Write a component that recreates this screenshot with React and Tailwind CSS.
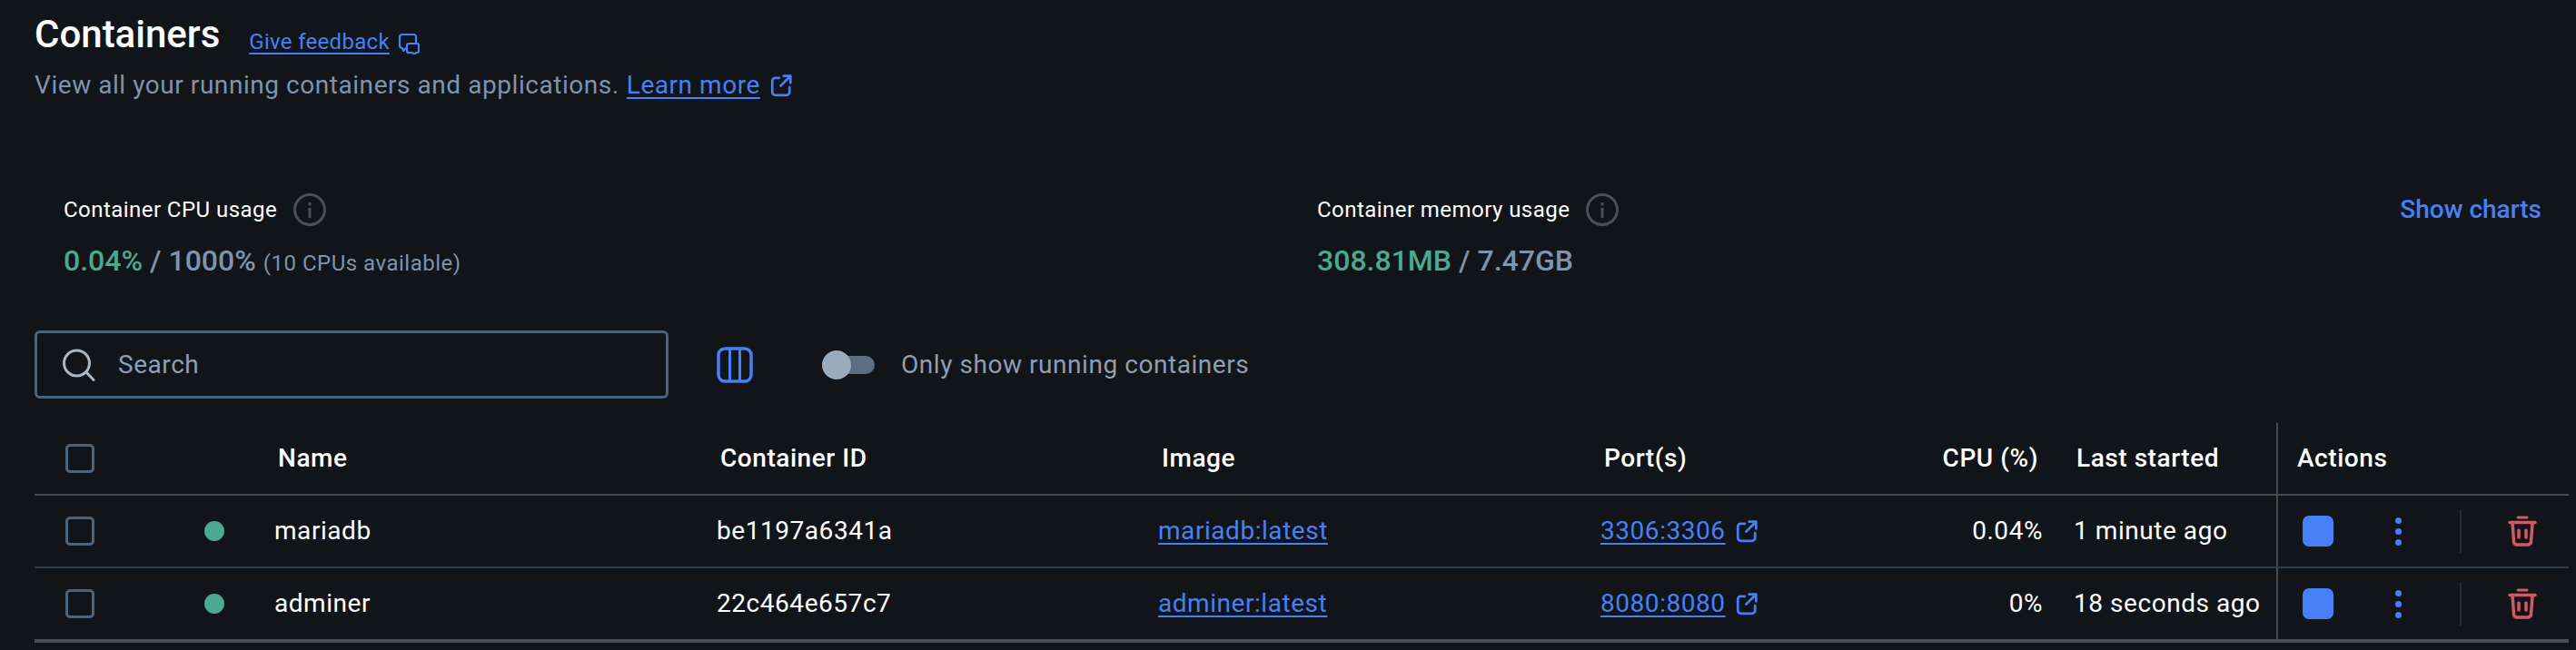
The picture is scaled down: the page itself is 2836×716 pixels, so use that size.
import React from "react";

const BLUE = "text-[#4680f7]";

function ExternalIcon({ className }) {
  return (
    <svg viewBox="0 0 24 24" fill="none" stroke="currentColor" strokeWidth="2.500" strokeLinecap="round" strokeLinejoin="round" className={className}>
      <path d="M10 4.500H6a3 3 0 0 0-3 3V19a3 3 0 0 0 3 3h11.500a3 3 0 0 0 3-3v-5" />
      <path d="M14.500 2.500h7v7" />
      <path d="M21 3l-9.500 9.500" />
    </svg>
  );
}

function FeedbackIcon({ className }) {
  return (
    <svg viewBox="0 0 24 24" fill="none" stroke="currentColor" strokeWidth="2.200" strokeLinejoin="round" className={className}>
      <path d="M5 2h12a3 3 0 0 1 3 3v9a3 3 0 0 1-3 3H9l-3 3-1-3a3 3 0 0 1-3-3V5a3 3 0 0 1 3-3z" />
      <path fill="#11151a" d="M12 12h9a2 2 0 0 1 2 2v6a2 2 0 0 1-2 2h-1l-2 2-2-2h-4a2 2 0 0 1-2-2v-6a2 2 0 0 1 2-2z" />
    </svg>
  );
}

function InfoIcon() {
  return (
    <svg viewBox="0 0 36 36" fill="none" className="w-9 h-9 ml-[18px] text-[#4a4f55]">
      <circle cx="18" cy="18" r="16.500" stroke="currentColor" strokeWidth="3" />
      <rect x="16.500" y="16" width="3" height="11" fill="currentColor" />
      <rect x="16.500" y="10" width="3" height="3.500" fill="currentColor" />
    </svg>
  );
}

function TrashIcon() {
  return (
    <svg viewBox="0 0 34 34" fill="none" stroke="#cd5a65" strokeWidth="3.500" strokeLinecap="round" strokeLinejoin="round" className="w-[34px] h-[34px]">
      <path d="M12 2h10" strokeWidth="3" />
      <path d="M3 7.500h28" />
      <path d="M6 8l1.500 20.500a3.500 3.500 0 0 0 3.500 3.500h12a3.500 3.500 0 0 0 3.500-3.500L28 8" />
      <path d="M13 16v8" />
      <path d="M21 16v8" />
    </svg>
  );
}

function Checkbox() {
  return <div className="w-8 h-8 ml-[34px] rounded-[5px] border-[3px] border-[#4f6378]" />;
}

const cols = "grid grid-cols-[187px_77px_487px_486px_487px_358px_129px_257px_322px] items-center";

function HeaderRow() {
  const cell = "pl-1 font-medium";
  return (
    <div className={`${cols} h-20 border-b-2 border-[#4a4a4a]`}>
      <Checkbox />
      <div />
      <div className={cell}>Name</div>
      <div className={cell}>Container ID</div>
      <div className={cell}>Image</div>
      <div className={cell}>Port(s)</div>
      <div className="font-medium text-right pr-[5px] whitespace-nowrap">CPU (%)</div>
      <div className="pl-[37px] font-medium">Last started</div>
      <div className="h-full flex items-center pl-[21px] border-l-2 border-[#4a4a4a] font-medium">Actions</div>
    </div>
  );
}

function ContainerRow({ name, id, image, port, cpu, started, last }) {
  return (
    <div className={`${cols} ${last ? "h-[82px] border-b-4 border-[#4a4f55]" : "h-20 border-b-2 border-[#2f3d4b]"}`}>
      <Checkbox />
      <div className="w-[22px] h-[22px] rounded-full bg-[#4ca88f]" />
      <div>{name}</div>
      <div>{id}</div>
      <div>
        <a className={`${BLUE} underline underline-offset-4`}>{image}</a>
      </div>
      <div className="flex items-center">
        <a className={`${BLUE} underline underline-offset-4`}>{port}</a>
        <ExternalIcon className={`w-[26px] h-[26px] ml-2.5 ${BLUE}`} />
      </div>
      <div className="text-right">{cpu}</div>
      <div className="pl-[34px] whitespace-nowrap">{started}</div>
      <div className="h-full flex items-center pl-[27px] border-l-2 border-[#4a4a4a]">
        <div className="w-[34px] h-[34px] rounded-[7px] bg-[#4680f7]" />
        <div className="ml-[68px] flex flex-col gap-[5px]">
          <span className="w-[7px] h-[7px] rounded-full bg-[#4680f7]" />
          <span className="w-[7px] h-[7px] rounded-full bg-[#4680f7]" />
          <span className="w-[7px] h-[7px] rounded-full bg-[#4680f7]" />
        </div>
        <div className="ml-[64px] w-0.5 h-12 bg-[#262b31]" />
        <div className="ml-[50px]">
          <TrashIcon />
        </div>
      </div>
    </div>
  );
}

export default function App() {
  return (
    <div className="w-[2836px] h-[716px] overflow-hidden bg-[#11151a] text-white pl-[38px] pr-2 text-[28px] tracking-[0.55px] font-['Roboto',sans-serif]">
      <div className="flex items-end h-[67px]">
        <h1 className="text-[42px] leading-[58px] font-medium tracking-normal">Containers</h1>
        <a className={`ml-8 mb-[5px] text-2xl tracking-[0.3px] underline underline-offset-4 ${BLUE}`}>Give feedback</a>
        <FeedbackIcon className={`w-6 h-6 ml-[9px] mb-[7px] ${BLUE}`} />
      </div>
      <div className="flex items-center mt-[9px] h-9 text-[#7f93ab]">
        <span>View all your running containers and applications.</span>
        <a className={`ml-2 underline underline-offset-4 ${BLUE}`}>Learn more</a>
        <ExternalIcon className={`w-[26px] h-[26px] ml-2.5 ${BLUE}`} />
      </div>

      <div className="flex mt-[101px] pl-8 pr-[30px]">
        <div className="w-[1380px]">
          <div className="flex items-center h-9 text-2xl tracking-[0.45px]">
            Container CPU usage
            <InfoIcon />
          </div>
          <div className="flex items-baseline mt-[18px] text-[32px] leading-10 tracking-normal text-[#7f93ab] font-medium">
            <span className="text-[#4ca88f]">0.04%</span>
            <span className="ml-2">/ 1000%</span>
            <span className="ml-2 text-2xl font-normal tracking-[0.5px]">(10 CPUs available)</span>
          </div>
        </div>
        <div className="flex-1">
          <div className="flex items-center h-9 text-2xl tracking-[0.45px]">
            Container memory usage
            <InfoIcon />
          </div>
          <div className="flex items-baseline mt-[18px] text-[32px] leading-10 tracking-normal text-[#7f93ab] font-medium">
            <span className="text-[#4ca88f]">308.81MB</span>
            <span className="ml-2">/ 7.47GB</span>
          </div>
        </div>
        <a className={`h-9 leading-9 font-medium tracking-normal ${BLUE}`}>Show charts</a>
      </div>

      <div className="flex items-center mt-[57px]">
        <div className="w-[698px] h-[75px] flex items-center pl-7 rounded-[6px] border-[3px] border-[#4f6378] text-[#8f9eb0]">
          <svg viewBox="0 0 36 36" fill="none" stroke="#a9b7c5" strokeWidth="3" strokeLinecap="round" className="w-9 h-9">
            <circle cx="15.500" cy="16" r="14" />
            <path d="M26 26l8 8.500" />
          </svg>
          <span className="ml-[25px]">Search</span>
        </div>
        <svg viewBox="0 0 40 40" fill="none" stroke="#4680f7" strokeWidth="3.500" className="w-10 h-10 ml-[53px]">
          <rect x="2" y="2" width="36" height="36" rx="7" />
          <path d="M14.500 2v36M25.500 2v36" strokeWidth="3" />
        </svg>
        <div className="relative w-[58px] h-8 ml-[76px] flex items-center">
          <div className="w-full h-5 rounded-full bg-[#5b6e84]" />
          <div className="absolute left-0 top-0 w-8 h-8 rounded-full bg-[#9aabbc]" />
        </div>
        <span className="ml-[29px] text-[#8f9eb0]">Only show running containers</span>
      </div>

      <div className="mt-[27px]">
        <HeaderRow />
        <ContainerRow name="mariadb" id="be1197a6341a" image="mariadb:latest" port="3306:3306" cpu="0.04%" started="1 minute ago" />
        <ContainerRow name="adminer" id="22c464e657c7" image="adminer:latest" port="8080:8080" cpu="0%" started="18 seconds ago" last />
      </div>
    </div>
  );
}
